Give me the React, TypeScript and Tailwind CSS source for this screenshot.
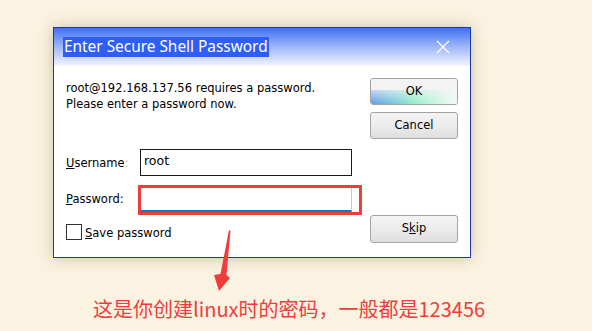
import React from "react";

const ui = { fontFamily: '"DejaVu Sans", Tahoma, sans-serif' };

function Btn({ children, primary, h = 27 }: { children: React.ReactNode; primary?: boolean; h?: number }) {
  return (
    <div
      className={`relative w-[88px] ${h === 28 ? "h-[28px]" : "h-[27px]"} rounded-[3px] border border-[#a3a3a3] overflow-hidden flex items-center justify-center text-[11.5px] text-black bg-gradient-to-b from-[#f4f4f4] via-[#ececec] to-[#dedede]`}
    >
      {primary && (
        <>
          <div className="absolute inset-0 bg-[#f3f3f3]" />
          <div className="absolute left-0 right-0 bottom-0 h-[14px] bg-gradient-to-r from-[#5d9ae8] via-[#8ef0c8] to-[#f4fbf8]" />
          <div className="absolute left-0 right-0 bottom-0 h-[14px] bg-gradient-to-b from-[#f3f3f3]/70 to-transparent" />
        </>
      )}
      <span className="relative">{children}</span>
    </div>
  );
}

export default function App() {
  return (
    <div className="relative w-[592px] h-[331px] bg-[#faf3e1] overflow-hidden" style={ui}>
      <div className="pt-[27px] pl-[53px]">
        <div className="w-[418px] h-[231px] border border-[#1c3a9e] bg-white flex flex-col shadow-[0_0_14px_rgba(120,100,60,0.35)]">
          <div className="h-[38px] shrink-0 bg-gradient-to-b from-[#416ef4] via-[#9fb7f8] to-[#f3f5fd] flex items-center justify-between pl-[9px] pr-[20px]">
            <span
              className="bg-[#2f5ef6] text-white text-[15.4px] leading-[20px] px-[1px]"
              style={{ fontFamily: '"Noto Sans", "Open Sans", sans-serif' }}
            >
              Enter Secure Shell Password
            </span>
            <svg width="14" height="14" viewBox="0 0 14 14">
              <path d="M1 1 L13 13 M13 1 L1 13" stroke="#ffffff" strokeWidth="1.3" />
            </svg>
          </div>
          <div className="flex flex-1">
            <div className="flex-1 pl-[12px] pt-[14px] text-[11.5px] text-black">
              <div className="leading-[16px]">
                <div>root@192.168.137.56 requires a password.</div>
                <div>Please enter a password now.</div>
              </div>
              <div className="mt-[37px] flex items-center h-[27px]">
                <span className="w-[74px] pt-[3px]">
                  <span className="underline">U</span>sername<span className="text-[#c8b890]">:</span>
                </span>
                <div className="w-[212px] h-[27px] border border-[#1a1a1a] pl-[3px] pt-[2px] text-[12.5px] leading-[18px]">
                  root
                </div>
              </div>
              <div className="mt-[10px] flex items-center h-[26px]">
                <span className="w-[74px] pt-[2px]">
                  <span className="underline">P</span>assword:
                </span>
                <div className="w-[212px] h-[26px] border border-[#c9c9c9] border-b-[2px] border-b-[#0a78d4]" />
              </div>
              <div className="mt-[12px] flex items-center h-[16px]">
                <div className="w-[16px] h-[16px] border border-[#333333] bg-white" />
                <span className="ml-[3px] pt-[3px]">
                  <span className="underline">S</span>ave password
                </span>
              </div>
            </div>
            <div className="w-[88px] mr-[12px] pt-[12px] pb-[14px] flex flex-col">
              <Btn primary>OK</Btn>
              <div className="mt-[7px]">
                <Btn>Cancel</Btn>
              </div>
              <div className="mt-auto">
                <Btn h={28}>
                  S<span className="underline">k</span>ip
                </Btn>
              </div>
            </div>
          </div>
        </div>
      </div>
      <div
        className="mt-[37px] pl-[93px] text-[20px] leading-[28px] text-[#f03c3c]"
        style={{ fontFamily: '"Noto Sans CJK SC", "Noto Sans", sans-serif' }}
      >
        这是你创建linux时的密码，一般都是123456
      </div>
      <div className="absolute left-[138px] top-[185px] w-[224px] h-[30px] border-[3px] border-[#f23c3c]" />
      <svg className="absolute left-0 top-0" width="592" height="331" viewBox="0 0 592 331">
        <polygon points="229,230 230.5,231 226.5,275 230,278 219,291 214,275 220.5,274" fill="#f23c3c" />
      </svg>
    </div>
  );
}
